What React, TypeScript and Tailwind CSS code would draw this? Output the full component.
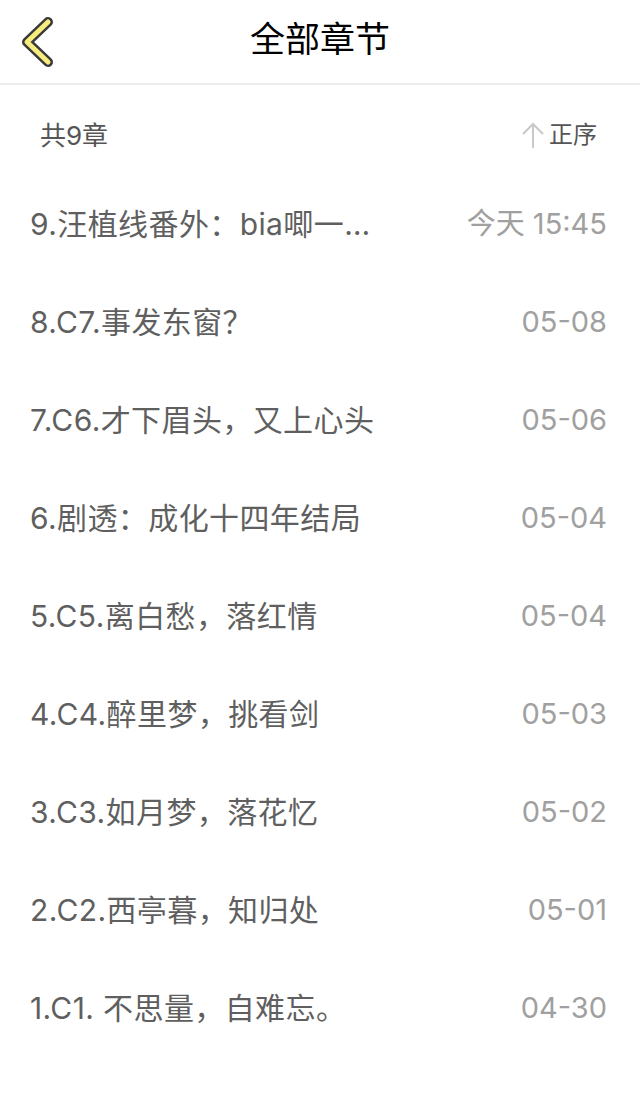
import { useState } from "react";

type Chapter = { title: string; date: string };

const CHAPTERS: Chapter[] = [
  { title: "9.汪植线番外：bia唧一口亲上去", date: "今天 15:45" },
  { title: "8.C7.事发东窗？", date: "05-08" },
  { title: "7.C6.才下眉头，又上心头", date: "05-06" },
  { title: "6.剧透：成化十四年结局", date: "05-04" },
  { title: "5.C5.离白愁，落红情", date: "05-04" },
  { title: "4.C4.醉里梦，挑看剑", date: "05-03" },
  { title: "3.C3.如月梦，落花忆", date: "05-02" },
  { title: "2.C2.西亭暮，知归处", date: "05-01" },
  { title: "1.C1. 不思量，自难忘。", date: "04-30" },
];

export default function App() {
  const [ascending, setAscending] = useState(false);
  const list = ascending ? [...CHAPTERS].reverse() : CHAPTERS;

  return (
    <div className="min-h-screen bg-white font-['Inter','Noto_Sans_CJK_SC',sans-serif]">
      {/* Header */}
      <div className="relative h-[85px] flex items-center justify-center border-b-2 border-[#ececec]">
        <button className="absolute left-[16px] top-[14px]">
          <svg width="40" height="56" viewBox="0 0 40 56" fill="none">
            <path d="M32 8 L11 28 L32 48" stroke="#3a3a3a" strokeWidth="10" strokeLinecap="round" strokeLinejoin="round" />
            <path d="M32 8 L11 28 L32 48" stroke="#f7ec7e" strokeWidth="5" strokeLinecap="round" strokeLinejoin="round" />
          </svg>
        </button>
        <h1 className="text-[35px] text-black leading-none -mt-[4px]">全部章节</h1>
      </div>

      {/* Summary row */}
      <div className="h-[88px] pt-[12px] flex items-center justify-between pl-[40px] pr-[43px]">
        <span className="text-[26px] text-[#555]">共9章</span>
        <button className="flex items-center gap-[4px]" onClick={() => setAscending(!ascending)}>
          <svg width="24" height="26" viewBox="0 0 24 26" fill="none">
            <path d="M2 12 L12 2 L22 12 M12 2 V26" stroke="#c9c9c9" strokeWidth="2" />
          </svg>
          <span className="text-[24px] text-[#555]">正序</span>
        </button>
      </div>

      {/* Chapter list */}
      <div className="pt-[2px]">
        {list.map((c) => (
          <div key={c.title} className="h-[98px] flex items-center justify-between pl-[30px] pr-[33px]">
            <span className="text-[30px] tracking-[0.4px] text-[#5f5f5f] truncate max-w-[345px]">{c.title}</span>
            <span className="text-[29px] text-[#a0a0a0] shrink-0">{c.date}</span>
          </div>
        ))}
      </div>
    </div>
  );
}
